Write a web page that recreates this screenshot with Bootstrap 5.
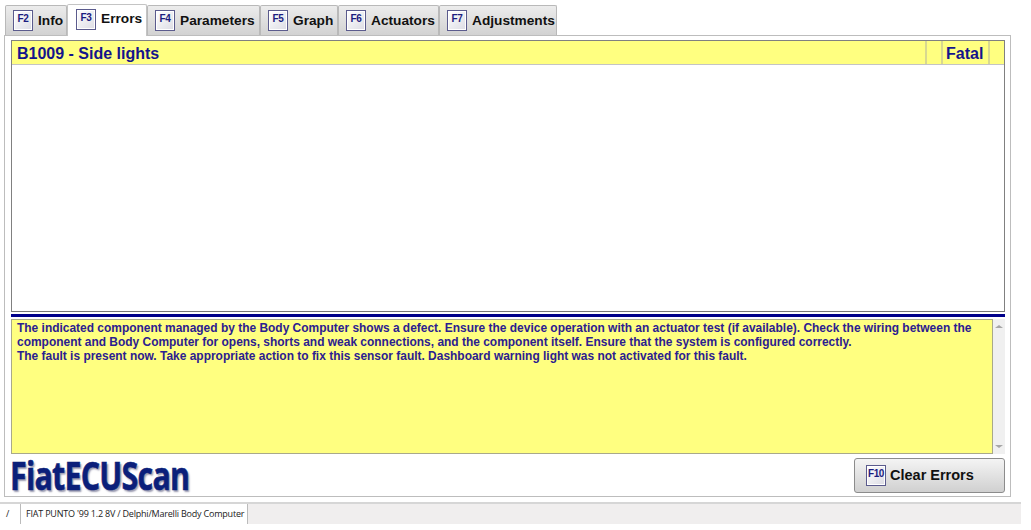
<!DOCTYPE html>
<html lang="en">
<head>
<meta charset="utf-8">
<title>FiatECUScan</title>
<link rel="stylesheet" href="https://cdn.jsdelivr.net/npm/bootstrap@5.3.0/dist/css/bootstrap.min.css">
<style>
html,body{height:530px;overflow:hidden;background:#fff;}
body{font-family:"Liberation Sans",Arial,sans-serif;color:#111;}
.app{width:1031px;height:530px;padding:4px 20px 0 0;}
.tabstrip{padding-left:5px;height:31px;flex-wrap:nowrap;position:relative;z-index:2;}
.tabbtn{height:30px;margin-top:1px;border:1px solid #b9b9b9;border-bottom:0;border-radius:2px 2px 0 0;background:linear-gradient(#ececec,#d2d2d2);font-weight:700;font-size:13.7px;color:#111;padding:0 2px 0 7px;gap:5px;display:flex;align-items:center;white-space:nowrap;}
.tabbtn.on{height:32px;margin-top:0;padding-left:8px;background:#fff;border-color:#c4c4c4;position:relative;}
.tabbtn.on .fkey{margin-top:-3px;}
.tabbtn.on .tablabel{margin-top:-2px;}
.tablabel{margin-top:1px;}
.fkey{width:20px;height:21px;flex:none;border:1px solid #5b5b8d;background:linear-gradient(135deg,#fff,#dcdce4);color:#1c1c80;font-size:10px;font-weight:700;line-height:15px;text-align:center;letter-spacing:-.4px;box-shadow:inset 0 0 0 1px #fff;}
.shell{margin-left:4px;height:462px;border:1px solid #bdbdbd;padding:4px 5px 0 6px;}
.errlist{height:272px;border:1px solid #808080;border-bottom-color:#777;background:#fff;}
.errrow{height:24px;background:#ffff80;border-bottom:1px solid #c4c4c4;color:#14148c;font-weight:700;font-size:16px;line-height:25px;}
.cellmain{flex:1 1 auto;padding-left:5px;}
.cellgap{width:16px;border-left:2px solid #d8d890;}
.cellsev{width:47px;border-left:2px solid #d8d890;padding-left:3px;}
.cellend{width:16px;border-left:2px solid #d8d890;}
.splitter{height:3px;background:#00008b;margin-top:2px;}
.descwrap{height:135px;margin-top:2px;}
.desctext{flex:1 1 auto;background:#ffff80;border:1px solid #a9a98a;padding:1px 5px;color:#2b2090;font-weight:700;font-size:11.96px;line-height:14px;}
.scrollrail{width:12px;flex:none;background:#f0f0f0;display:flex;flex-direction:column;justify-content:space-between;align-items:center;padding:6px 0;}
.tri-up{width:0;height:0;border:4px solid transparent;border-top:0;border-bottom:3px solid #a6a6a6;}
.tri-down{width:0;height:0;border:4px solid transparent;border-bottom:0;border-top:3px solid #a6a6a6;}
.footbar{height:41px;padding-top:4px;}
.brand{font-family:"Open Sans","Liberation Sans",sans-serif;font-weight:700;font-size:40px;line-height:36px;letter-spacing:-1px;color:#0b1f7a;-webkit-text-stroke:.6px #0b1f7a;text-shadow:2px 2px 2px #9a9ab0;transform:translate(-1px,-1px) scaleX(.76);transform-origin:left center;white-space:nowrap;}
.clearbtn{width:151px;height:35px;margin-top:0;border:1px solid #8c8c8c;border-radius:3px;background:linear-gradient(#f4f4f4,#d0d0d0);font-weight:700;font-size:14.5px;color:#111;padding:0 0 0 11px;gap:4px;}
.statusbar{height:22px;margin-top:5px;width:1021px;background:#f0eeee;border-top:2px solid #d6d6d6;font-family:"Open Sans","Liberation Sans",sans-serif;font-size:9px;color:#222;}
.statcell{background:#fff;border-right:1px solid #bbb;line-height:19px;white-space:nowrap;}
.statslash{width:21px;padding-left:6px;}
.statname{width:227px;padding-left:5px;letter-spacing:-.2px;}
</style>
</head>
<body>
<div class="app d-flex flex-column">
  <div class="tabstrip d-flex">
    <div class="tabbtn" style="width:62px"><span class="fkey">F2</span><span class="tablabel">Info</span></div>
    <div class="tabbtn on" style="width:80px"><span class="fkey">F3</span><span class="tablabel">Errors</span></div>
    <div class="tabbtn" style="width:113px"><span class="fkey">F4</span><span class="tablabel">Parameters</span></div>
    <div class="tabbtn" style="width:78px"><span class="fkey">F5</span><span class="tablabel">Graph</span></div>
    <div class="tabbtn" style="width:101px"><span class="fkey">F6</span><span class="tablabel">Actuators</span></div>
    <div class="tabbtn" style="width:118px"><span class="fkey">F7</span><span class="tablabel">Adjustments</span></div>
  </div>
  <div class="shell d-flex flex-column">
    <div class="errlist">
      <div class="errrow d-flex">
        <div class="cellmain">B1009 - Side lights</div>
        <div class="cellgap"></div>
        <div class="cellsev">Fatal</div>
        <div class="cellend"></div>
      </div>
    </div>
    <div class="splitter"></div>
    <div class="descwrap d-flex">
      <div class="desctext">The indicated component managed by the Body Computer shows a defect. Ensure the device operation with an actuator test (if available). Check the wiring between the component and Body Computer for opens, shorts and weak connections, and the component itself. Ensure that the system is configured correctly.<br>The fault is present now. Take appropriate action to fix this sensor fault. Dashboard warning light was not activated for this fault.</div>
      <div class="scrollrail"><span class="tri-up"></span><span class="tri-down"></span></div>
    </div>
    <div class="footbar d-flex justify-content-between">
      <div class="brand">FiatECUScan</div>
      <button type="button" class="btn clearbtn d-flex align-items-center"><span class="fkey">F10</span><span>Clear Errors</span></button>
    </div>
  </div>
  <div class="statusbar d-flex">
    <div class="statcell statslash">/</div>
    <div class="statcell statname">FIAT PUNTO '99 1.2 8V / Delphi/Marelli Body Computer</div>
  </div>
</div>
</body>
</html>
